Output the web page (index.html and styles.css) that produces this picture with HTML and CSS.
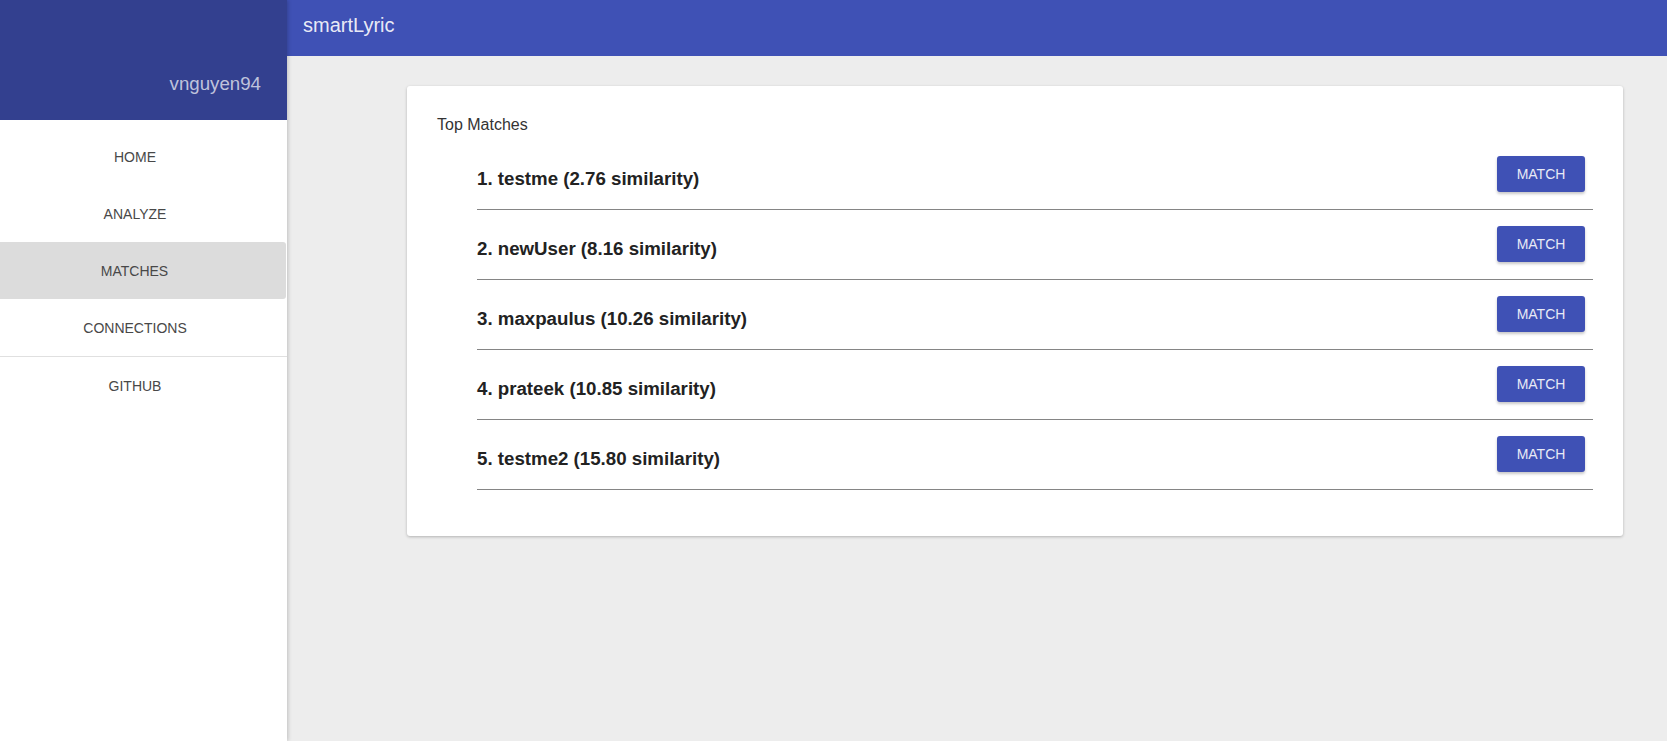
FILE: index.html
```html
<!DOCTYPE html>
<html lang="en">
<head>
    <meta charset="UTF-8">
    <meta name="viewport" content="width=device-width, initial-scale=1.0">
    <title>smartLyric - Matches</title>
    <link rel="stylesheet" href="styles.css">
</head>
<body>
    <div class="layout">
        <aside class="sidebar">
            <div class="sidebar-header">
                <span class="username">vnguyen94</span>
            </div>
            <ul class="nav">
                <li class="nav-item">HOME</li>
                <li class="nav-item">ANALYZE</li>
                <li class="nav-item active">MATCHES</li>
                <li class="nav-item">CONNECTIONS</li>
                <li class="nav-divider"></li>
                <li class="nav-item">GITHUB</li>
            </ul>
        </aside>

        <div class="main">
            <header class="topbar">smartLyric</header>

            <div class="content">
                <div class="card">
                    <div class="card-title">Top Matches</div>
                    <ul class="match-list">
                        <li class="match-row">
                            <span class="match-name">1. testme (2.76 similarity)</span>
                            <button class="match-btn">MATCH</button>
                        </li>
                        <li class="match-row">
                            <span class="match-name">2. newUser (8.16 similarity)</span>
                            <button class="match-btn">MATCH</button>
                        </li>
                        <li class="match-row">
                            <span class="match-name">3. maxpaulus (10.26 similarity)</span>
                            <button class="match-btn">MATCH</button>
                        </li>
                        <li class="match-row">
                            <span class="match-name">4. prateek (10.85 similarity)</span>
                            <button class="match-btn">MATCH</button>
                        </li>
                        <li class="match-row">
                            <span class="match-name">5. testme2 (15.80 similarity)</span>
                            <button class="match-btn">MATCH</button>
                        </li>
                    </ul>
                </div>
            </div>
        </div>
    </div>
</body>
</html>
```

FILE: styles.css
```css
html, body {
    height: 100%;
}
body {
    margin: 0;
    font-family: "Liberation Sans", Arial, sans-serif;
    background-color: #ededed;
    color: #333;
}
.layout {
    display: flex;
    min-height: 100%;
}
.sidebar {
    width: 287px;
    flex-shrink: 0;
    background-color: white;
    box-shadow: 1px 0 4px rgba(0,0,0,0.2);
    position: relative;
    z-index: 2;
}
.sidebar-header {
    height: 120px;
    background-color: #33408f;
    display: flex;
    align-items: flex-end;
    justify-content: flex-end;
    padding: 0 26px 25px 0;
    box-sizing: border-box;
}
.username {
    font-size: 18.7px;
    line-height: 22px;
    color: rgba(255,255,255,0.7);
}
.nav {
    list-style: none;
    margin: 0;
    padding: 8px 0 0 0;
}
.nav-item {
    height: 57px;
    line-height: 58px;
    font-size: 14px;
    color: #484848;
    text-align: center;
    padding-right: 17px;
    cursor: pointer;
}
.nav-item.active {
    background-color: #dcdcdc;
    border-radius: 0 3px 3px 0;
    margin-right: 1px;
}
.nav-divider {
    height: 1px;
    background-color: #e0e0e0;
}
.main {
    flex: 1;
    display: flex;
    flex-direction: column;
}
.topbar {
    height: 56px;
    line-height: 50px;
    padding-left: 16px;
    background-color: #3f51b5;
    color: rgba(255,255,255,0.9);
    font-size: 20px;
    box-sizing: border-box;
}
.content {
    padding: 30px 44px 0 120px;
}
.card {
    background-color: white;
    border-radius: 3px;
    box-shadow: 0 1px 3px rgba(0,0,0,0.25);
    padding: 30px;
}
.card-title {
    font-size: 16px;
    line-height: 18px;
    color: #333;
}
.match-list {
    list-style: none;
    margin: 6px 0 16px 0;
    padding-left: 40px;
}
.match-row {
    display: flex;
    justify-content: space-between;
    align-items: flex-start;
    height: 69px;
    border-bottom: 1px solid #858585;
}
.match-name {
    margin-top: 28px;
    font-size: 18.7px;
    line-height: 22px;
    font-weight: bold;
    color: #222;
}
.match-btn {
    margin: 16px 8px 0 0;
    width: 88px;
    height: 36px;
    border: none;
    border-radius: 3px;
    background-color: #3f51b5;
    color: #e8eaf6;
    font-family: "Liberation Sans", Arial, sans-serif;
    font-size: 14px;
    box-shadow: 0 2px 3px rgba(0,0,0,0.22);
    cursor: pointer;
}
```
